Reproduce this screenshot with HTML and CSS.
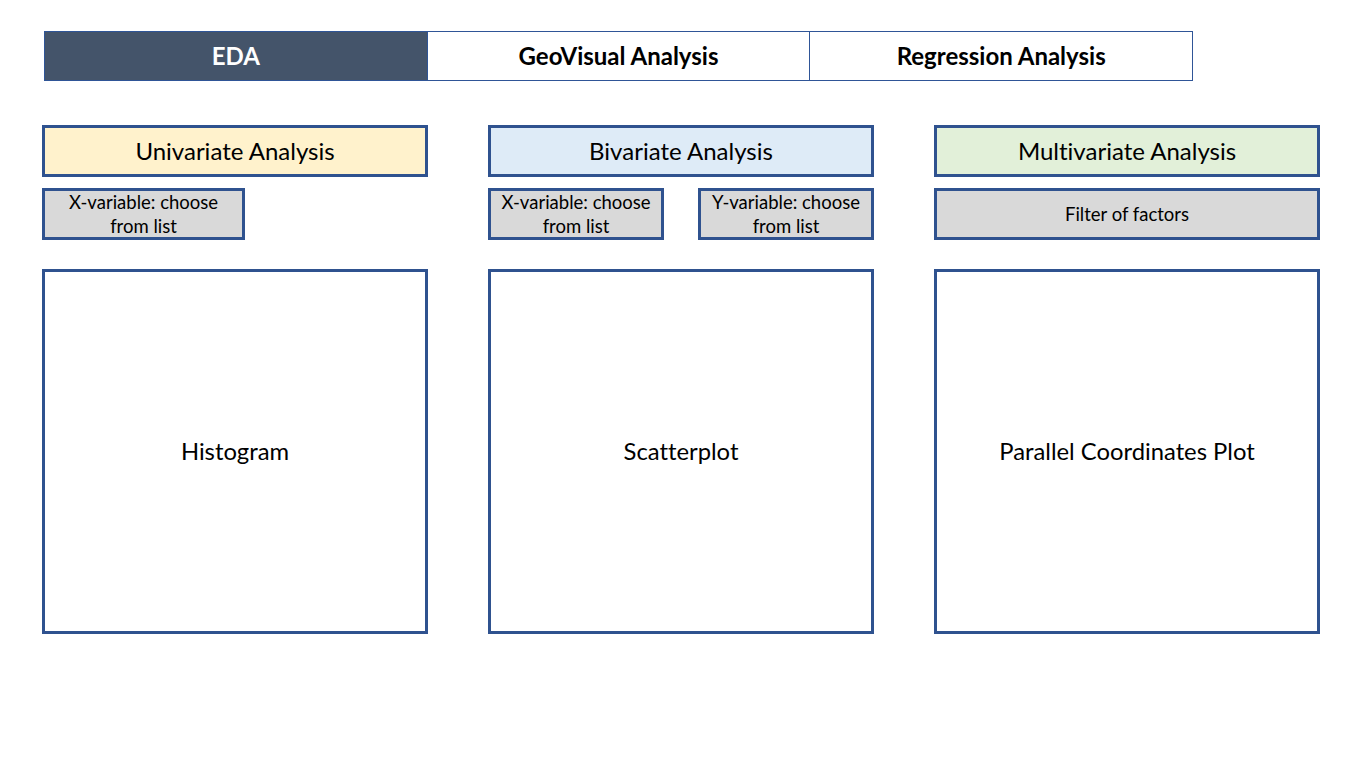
FILE: index.html
```html
<!DOCTYPE html>
<html lang="en">
<head>
<meta charset="utf-8">
<title>EDA Dashboard</title>
<link rel="stylesheet" href="styles.css">
</head>
<body>
<div class="page">
  <nav class="tabs">
    <div class="tab active">EDA</div>
    <div class="tab">GeoVisual Analysis</div>
    <div class="tab">Regression Analysis</div>
  </nav>
  <main class="columns">
    <section class="col">
      <div class="head uni">Univariate Analysis</div>
      <div class="controls">
        <div class="ctrl narrow">X-variable: choose<br>from list</div>
      </div>
      <div class="plot">Histogram</div>
    </section>
    <section class="col">
      <div class="head bi">Bivariate Analysis</div>
      <div class="controls split">
        <div class="ctrl half">X-variable: choose<br>from list</div>
        <div class="ctrl half">Y-variable: choose<br>from list</div>
      </div>
      <div class="plot">Scatterplot</div>
    </section>
    <section class="col">
      <div class="head multi">Multivariate Analysis</div>
      <div class="controls">
        <div class="ctrl full">Filter of factors</div>
      </div>
      <div class="plot">Parallel Coordinates Plot</div>
    </section>
  </main>
</div>
</body>
</html>
```
FILE: styles.css
```css
* { box-sizing: border-box; }
html, body { margin: 0; padding: 0; background: #fff; }
body {
  font-family: "Lato", "Liberation Sans", sans-serif;
  font-variant-ligatures: none;
  color: #000;
  width: 1363px;
  height: 766px;
  overflow: hidden;
}
.page { padding: 31px 0 0 42px; }
.tabs {
  display: flex;
  width: 1149px;
  height: 50px;
  margin-left: 2px;
  border: 1px solid #2f5597;
}
.tab {
  flex: 1;
  display: flex;
  align-items: center;
  justify-content: center;
  font-weight: 700;
  font-size: 24px;
  padding-bottom: 2px;
  background: #fff;
}
.tab + .tab { border-left: 1px solid #2f5597; }
.tab.active { background: #44546a; color: #fff; }

.columns {
  display: flex;
  gap: 60px;
  margin-top: 44px;
}
.col {
  width: 386px;
  display: flex;
  flex-direction: column;
}
.head {
  height: 52px;
  border: 3px solid #2f528f;
  display: flex;
  align-items: center;
  justify-content: center;
  font-size: 24px;
  padding-bottom: 1px;
}
.uni { background: #fff2cc; }
.bi { background: #deebf7; }
.multi { background: #e2f0d9; }
.controls {
  display: flex;
  margin-top: 11px;
  height: 52px;
}
.controls.split { justify-content: space-between; }
.ctrl {
  height: 52px;
  border: 3px solid #2f528f;
  background: #d9d9d9;
  display: flex;
  align-items: center;
  justify-content: center;
  text-align: center;
  font-size: 18.5px;
  line-height: 24px;
}
.narrow { width: 203px; }
.half { width: 176px; }
.full { width: 386px; }
.plot {
  margin-top: 29px;
  height: 365px;
  border: 3px solid #2f528f;
  display: flex;
  align-items: center;
  justify-content: center;
  font-size: 23.8px;
  padding-bottom: 1px;
}
```
